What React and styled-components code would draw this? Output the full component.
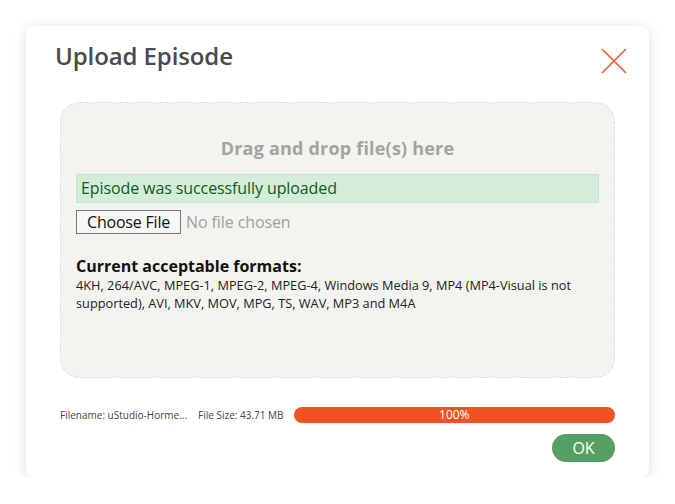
import React from "react";
import styled, { createGlobalStyle } from "styled-components";

const Global = createGlobalStyle`
  html, body { margin: 0; padding: 0; background: #ffffff; }
  body { font-family: "Open Sans", "Noto Sans", sans-serif; }
  * { box-sizing: border-box; }
`;

const Page = styled.div`
  padding: 26px 0 0 26px;
`;

const Card = styled.div`
  width: 623px;
  height: 451px;
  background: #fff;
  border-radius: 8px;
  box-shadow: 0 2px 14px rgba(0, 0, 0, 0.13);
  display: flex;
  flex-direction: column;
`;

const Header = styled.div`
  display: flex;
  justify-content: space-between;
  align-items: flex-start;
  padding: 13px 22px 0 29px;
  height: 76px;
`;

const Title = styled.h1`
  margin: 0;
  font-size: 24px;
  font-weight: 600;
  color: #4a4a4a;
  letter-spacing: -0.1px;
`;

const Close = styled.button`
  border: 0;
  background: none;
  padding: 0;
  margin-top: 9px;
  width: 26px;
  height: 26px;
  cursor: pointer;
`;

const Body = styled.div`
  padding: 0 34px;
  flex: 1;
  display: flex;
  flex-direction: column;
`;

const DropZone = styled.div`
  height: 276px;
  background: #f3f3ef;
  border: 1px dashed #e2e0d5;
  border-radius: 20px;
  padding: 32px 15px 0 15px;
`;

const DropTitle = styled.div`
  text-align: center;
  font-size: 18px;
  font-weight: 700;
  color: #a5a39c;
  line-height: 26px;
  margin-bottom: 13px;
  letter-spacing: 0.2px;
`;

const Alert = styled.div`
  background: #d4edda;
  border: 1px solid #c3e6cb;
  color: #155724;
  font-size: 16px;
  line-height: 27px;
  height: 29px;
  padding: 0 4px;
  letter-spacing: -0.1px;
`;

const FileRow = styled.div`
  display: flex;
  align-items: center;
  gap: 5px;
  margin-top: 7px;
`;

const ChooseBtn = styled.span`
  display: inline-block;
  border: 1px solid #767676;
  background: #f7f7f7;
  font-size: 16px;
  color: #111;
  padding: 0 10px;
  height: 24px;
  line-height: 22px;
  letter-spacing: -0.2px;
`;

const NoFile = styled.span`
  font-size: 16px;
  color: #a0a09c;
  letter-spacing: -0.1px;
`;

const FormatsTitle = styled.div`
  margin-top: 22px;
  font-size: 16px;
  font-weight: 700;
  color: #111;
  line-height: 20px;
`;

const FormatsText = styled.div`
  font-size: 12.75px;
  color: #222;
  line-height: 18px;
`;

const StatusRow = styled.div`
  display: flex;
  align-items: center;
  margin-top: 29px;
`;

const Meta = styled.span`
  font-size: 10px;
  color: #444;
  white-space: nowrap;
  margin-right: ${(p) => p.$gap || 0}px;
`;

const Progress = styled.div`
  flex: 1;
  height: 16px;
  border-radius: 8px;
  background: #f05224;
  color: #fff;
  font-size: 12px;
  line-height: 16px;
  text-align: center;
  overflow: hidden;
`;

const Footer = styled.div`
  display: flex;
  justify-content: flex-end;
  margin-top: 11px;
`;

const OkBtn = styled.button`
  width: 63px;
  height: 28px;
  border-radius: 14px;
  background: #57a064;
  border: 0;
  color: #fff;
  font-family: inherit;
  font-size: 16px;
  line-height: 28px;
  padding: 0;
`;

export default function App() {
  return (
    <>
      <Global />
      <Page>
        <Card>
          <Header>
            <Title>Upload Episode</Title>
            <Close aria-label="close">
              <svg width="26" height="26" viewBox="0 0 26 26">
                <path d="M1 1 L25 25 M25 1 L1 25" stroke="#f0592f" strokeWidth="1.6" />
              </svg>
            </Close>
          </Header>
          <Body>
            <DropZone>
              <DropTitle>Drag and drop file(s) here</DropTitle>
              <Alert>Episode was successfully uploaded</Alert>
              <FileRow>
                <ChooseBtn>Choose File</ChooseBtn>
                <NoFile>No file chosen</NoFile>
              </FileRow>
              <FormatsTitle>Current acceptable formats:</FormatsTitle>
              <FormatsText>
                4KH, 264/AVC, MPEG-1, MPEG-2, MPEG-4, Windows Media 9, MP4 (MP4-Visual is not
                supported), AVI, MKV, MOV, MPG, TS, WAV, MP3 and M4A
              </FormatsText>
            </DropZone>
            <StatusRow>
              <Meta $gap={11}>Filename: uStudio-Horme...</Meta>
              <Meta $gap={10}>File Size: 43.71 MB</Meta>
              <Progress>100%</Progress>
            </StatusRow>
            <Footer>
              <OkBtn>OK</OkBtn>
            </Footer>
          </Body>
        </Card>
      </Page>
    </>
  );
}
